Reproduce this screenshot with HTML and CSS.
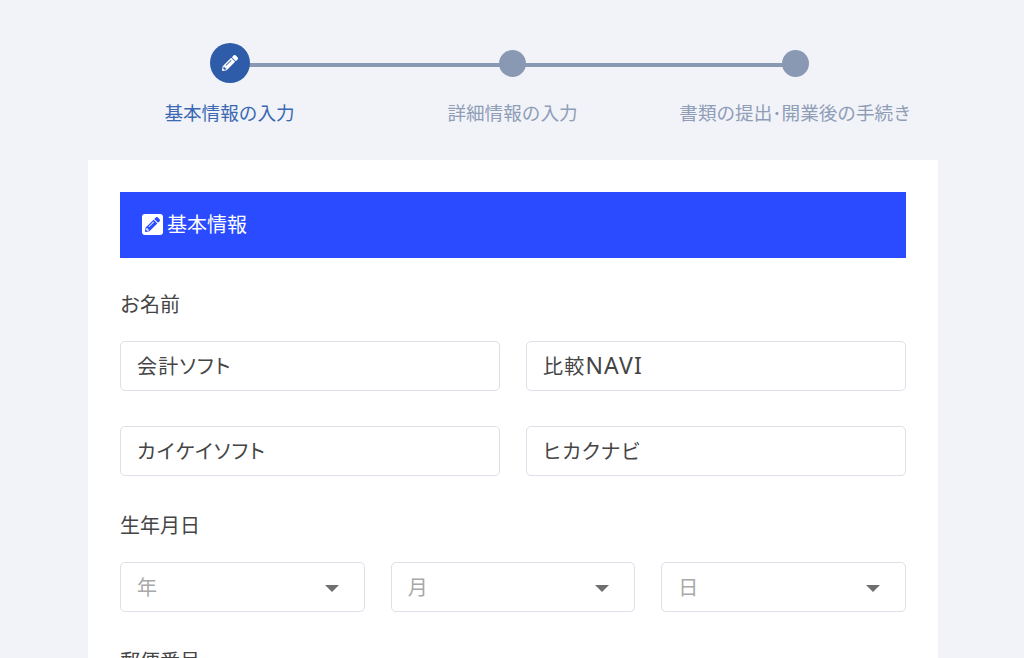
FILE: index.html
```html
<!DOCTYPE html>
<html lang="ja">
<head>
<meta charset="utf-8">
<title>基本情報の入力</title>
<link rel="stylesheet" href="styles.css">
</head>
<body>
<ol class="steps">
  <li class="step step-active">
    <span class="dot">
      <svg viewBox="0 0 512 512" width="16" height="16"><path class="pencil-white" d="M497.9 142.1l-46.1 46.1c-4.7 4.7-12.3 4.7-17 0l-111-111c-4.7-4.7-4.7-12.3 0-17l46.1-46.1c18.7-18.7 49.1-18.7 67.9 0l60.1 60.1c18.8 18.7 18.8 49.1 0 67.9zM284.2 99.8L21.6 362.4.4 483.9c-2.9 16.4 11.4 30.6 27.8 27.8l121.5-21.3 262.6-262.6c4.7-4.7 4.7-12.3 0-17l-111-111c-4.8-4.7-12.4-4.7-17.1 0zM124.1 339.9c-5.5-5.5-5.5-14.3 0-19.8l154-154c5.5-5.5 14.3-5.5 19.8 0s5.5 14.3 0 19.8l-154 154c-5.5 5.5-14.3 5.5-19.8 0zM88 424h48v36.3l-64.5 11.3-31.1-31.1L51.7 376H88v48z"/></svg>
    </span>
    <span class="step-label">基本情報の入力</span>
  </li>
  <li class="step">
    <span class="dot"></span>
    <span class="step-label">詳細情報の入力</span>
  </li>
  <li class="step step-last">
    <span class="dot"></span>
    <span class="step-label">書類の提出･開業後の手続き</span>
  </li>
</ol>
<main class="card">
  <h2 class="banner">
    <span class="banner-icon">
      <svg viewBox="0 0 512 512" width="15" height="15"><path class="pencil-blue" d="M497.9 142.1l-46.1 46.1c-4.7 4.7-12.3 4.7-17 0l-111-111c-4.7-4.7-4.7-12.3 0-17l46.1-46.1c18.7-18.7 49.1-18.7 67.9 0l60.1 60.1c18.8 18.7 18.8 49.1 0 67.9zM284.2 99.8L21.6 362.4.4 483.9c-2.9 16.4 11.4 30.6 27.8 27.8l121.5-21.3 262.6-262.6c4.7-4.7 4.7-12.3 0-17l-111-111c-4.8-4.7-12.4-4.7-17.1 0zM124.1 339.9c-5.5-5.5-5.5-14.3 0-19.8l154-154c5.5-5.5 14.3-5.5 19.8 0s5.5 14.3 0 19.8l-154 154c-5.5 5.5-14.3 5.5-19.8 0zM88 424h48v36.3l-64.5 11.3-31.1-31.1L51.7 376H88v48z"/></svg>
    </span>
    <span class="banner-text">基本情報</span>
  </h2>
  <p class="field-label name-label">お名前</p>
  <div class="grid-two">
    <div class="input">会計ソフト</div>
    <div class="input">比較<span class="latin">NAVI</span></div>
    <div class="input">カイケイソフト</div>
    <div class="input">ヒカクナビ</div>
  </div>
  <p class="field-label birth-label">生年月日</p>
  <div class="grid-three">
    <div class="input select">年<span class="caret"></span></div>
    <div class="input select">月<span class="caret"></span></div>
    <div class="input select">日<span class="caret"></span></div>
  </div>
  <p class="field-label postal-label">郵便番号</p>
</main>
</body>
</html>
```
FILE: styles.css
```css
* { box-sizing: border-box; }
html, body { height: 100%; }
body {
  margin: 0;
  background: #f1f3f9;
  color: #454545;
  font-family: "Noto Sans", "Noto Sans CJK JP", sans-serif;
  overflow: hidden;
}
.steps {
  list-style: none;
  margin: 0 0 0 88px;
  padding: 43px 0 0;
  width: 849px;
  height: 160px;
  display: grid;
  grid-template-columns: repeat(3, 1fr);
}
.step {
  position: relative;
  display: flex;
  flex-direction: column;
  align-items: center;
}
.step::after {
  content: "";
  position: absolute;
  left: 50%;
  top: 20px;
  width: 100%;
  height: 4px;
  background: #8a99b3;
}
.step-last::after { display: none; }
.dot {
  position: relative;
  z-index: 1;
  width: 27px;
  height: 27px;
  margin: 7px 0 21px;
  border-radius: 50%;
  background: #8a99b3;
}
.step-active .dot {
  width: 40px;
  height: 40px;
  margin: 0 0 15px;
  background: #2e5ca8;
  display: flex;
  align-items: center;
  justify-content: center;
}
.pencil-white { fill: #fff; }
.pencil-blue { fill: #2a4bff; }
.step-label {
  font-size: 18.6px;
  line-height: 30px;
  color: #8f9db6;
  white-space: nowrap;
}
.step-active .step-label { color: #3a68b2; }
.card {
  width: 850px;
  margin: 0 0 0 88px;
  padding: 32px;
  background: #fff;
}
.banner {
  display: flex;
  align-items: center;
  gap: 4px;
  height: 66px;
  margin: 0;
  padding: 0 0 1px 22px;
  background: #2a4bff;
  color: #fff;
  font-size: 20px;
  font-weight: 400;
}
.banner-text { position: relative; top: -1px; }
.banner-icon {
  width: 21px;
  height: 21px;
  border-radius: 3px;
  background: #fff;
  display: flex;
  align-items: center;
  justify-content: center;
}
.field-label {
  margin: 0;
  font-size: 20px;
  line-height: 30px;
}
.name-label { padding-top: 32px; height: 83px; }
.birth-label { padding-top: 35px; height: 86px; }
.postal-label { padding-top: 35px; }
.grid-two {
  display: grid;
  grid-template-columns: 1fr 1fr;
  column-gap: 26px;
  row-gap: 35px;
}
.grid-three {
  display: grid;
  grid-template-columns: repeat(3, 1fr);
  column-gap: 26px;
}
.input {
  position: relative;
  height: 50px;
  padding: 0 16px;
  border: 1px solid #dde0e8;
  border-radius: 5px;
  background: #fff;
  font-size: 20px;
  line-height: 50px;
  letter-spacing: 1.2px;
  white-space: nowrap;
  font-feature-settings: "palt";
}
.latin {
  font-size: 23px;
  line-height: 1;
}
.select { color: #a8a8a8; }
.caret {
  position: absolute;
  right: 25px;
  top: 22px;
  border-style: solid;
  border-width: 7px 7.5px 0;
  border-color: #6f6f6f transparent transparent;
}
```
